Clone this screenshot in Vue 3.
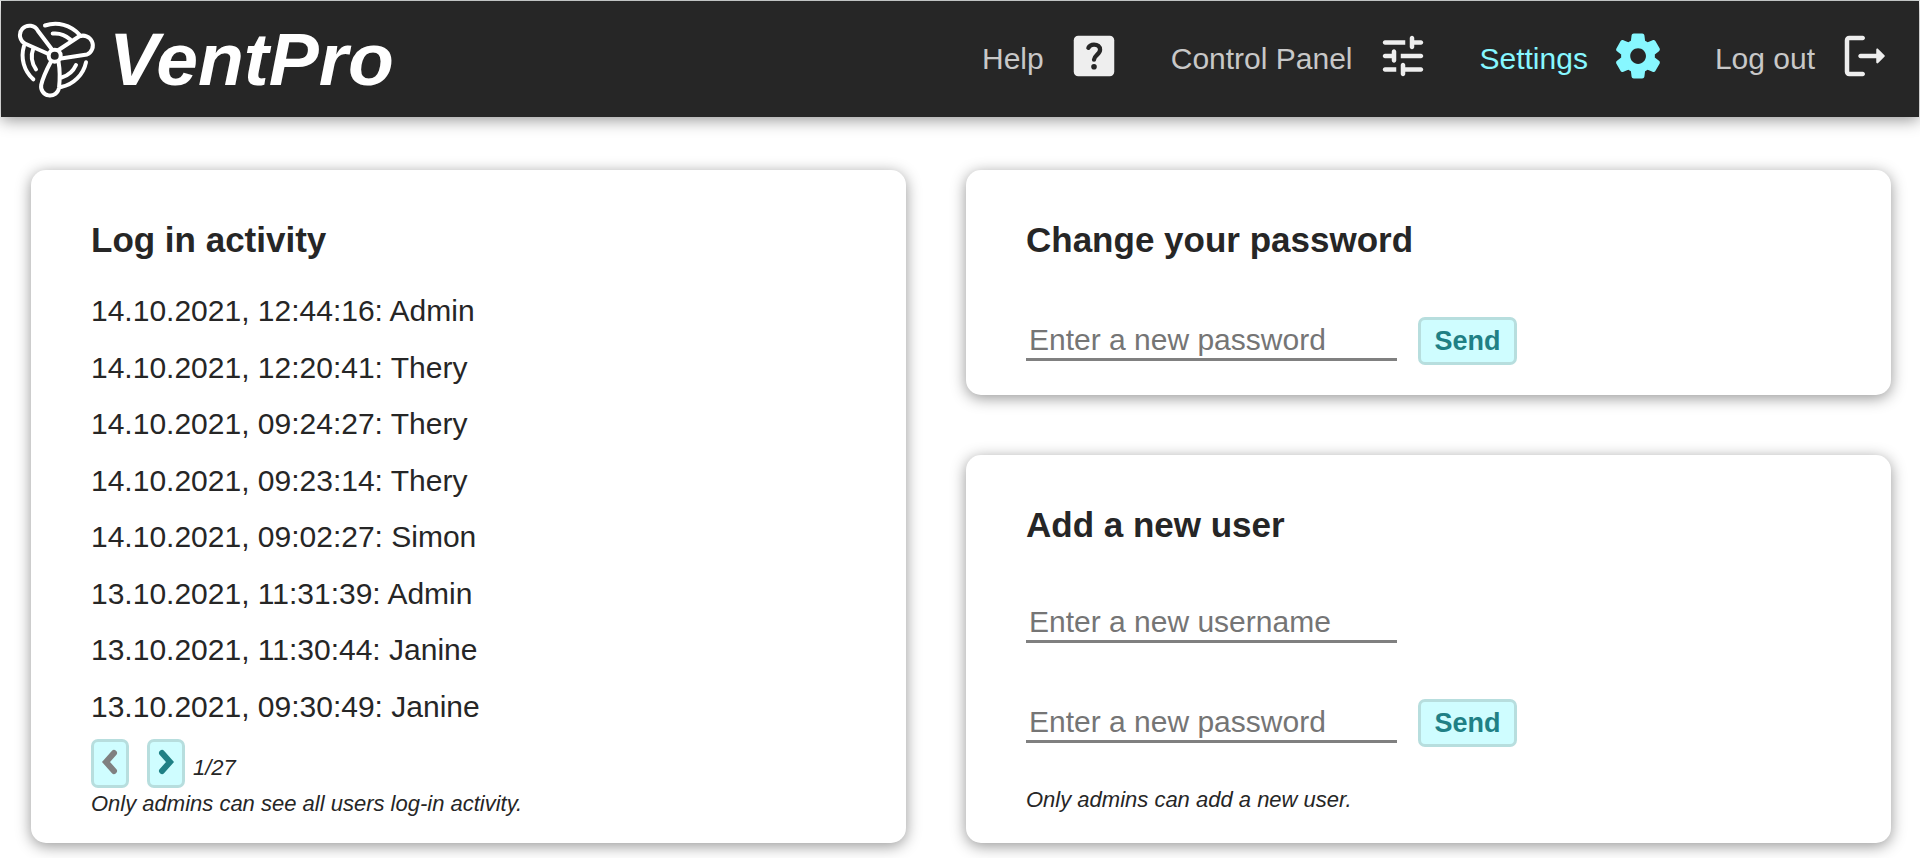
<script setup>
import { ref } from 'vue'

const activity = [
  '14.10.2021, 12:44:16: Admin',
  '14.10.2021, 12:20:41: Thery',
  '14.10.2021, 09:24:27: Thery',
  '14.10.2021, 09:23:14: Thery',
  '14.10.2021, 09:02:27: Simon',
  '13.10.2021, 11:31:39: Admin',
  '13.10.2021, 11:30:44: Janine',
  '13.10.2021, 09:30:49: Janine'
]

const ownPassword = ref('')
const userName = ref('')
const userPassword = ref('')
</script>

<template>
  <div class="page">
    <header class="topbar">
      <a class="brand" href="#">
        <svg class="brand-mark" viewBox="0 -1 80 80" aria-hidden="true">
          <circle cx="37.7" cy="35.7" r="6" />
          <path d="M35 29.5 21 11A9.5 9.5 0 1 0 9 24L31.5 34" />
          <path d="M41.5 30 62 16.5A9.5 9.5 0 1 1 70 34.5L44 38.5" />
          <path d="M34 41.5C30 49 26 57 24.2 65A9 9 0 1 0 42 68C43 59 43 50 41.5 41.5" />
          <path d="M28 5.5A32 32 0 0 1 62.3 14.5M35.7 13.5A22.5 22.5 0 0 1 53.3 19.5" />
          <path d="M7 26A32 32 0 0 0 16.3 59.3M16.3 28.5A22.5 22.5 0 0 0 19 49.3" />
          <path d="M69 42.3A32 32 0 0 1 44 67M59 45A22.5 22.5 0 0 1 44.5 57.5" />
        </svg>
        <span class="brand-name">VentPro</span>
      </a>
      <nav class="menu">
        <a class="menu-item" href="#">
          <span>Help</span>
          <svg class="icon" viewBox="0 0 24 24" aria-hidden="true">
            <rect x="3" y="3" width="18" height="18" rx="2" />
            <path class="question" d="M9.5 8.4C9.9 7.5 10.8 6.9 12 6.9c1.6 0 2.7.9 2.7 2.3 0 2-2.6 2.5-2.7 4.4" />
            <circle class="question-dot" cx="12" cy="16.8" r="1.25" />
          </svg>
        </a>
        <a class="menu-item" href="#">
          <span>Control Panel</span>
          <svg class="icon" viewBox="0 0 24 24" aria-hidden="true">
            <path d="M3 18c0 .55.45 1 1 1h5v-2H4c-.55 0-1 .45-1 1zM3 6c0 .55.45 1 1 1h9V5H4c-.55 0-1 .45-1 1zm10 14v-1h7c.55 0 1-.45 1-1s-.45-1-1-1h-7v-1c0-.55-.45-1-1-1s-1 .45-1 1v4c0 .55.45 1 1 1s1-.45 1-1zM7 10v1H4c-.55 0-1 .45-1 1s.45 1 1 1h3v1c0 .55.45 1 1 1s1-.45 1-1v-4c0-.55-.45-1-1-1s-1 .45-1 1zm14 2c0-.55-.45-1-1-1h-9v2h9c.55 0 1-.45 1-1zm-5-3c.55 0 1-.45 1-1V7h3c.55 0 1-.45 1-1s-.45-1-1-1h-3V4c0-.55-.45-1-1-1s-1 .45-1 1v4c0 .55.45 1 1 1z" />
          </svg>
        </a>
        <a class="menu-item active" href="#" aria-current="page">
          <span>Settings</span>
          <svg class="icon" viewBox="0 0 24 24" aria-hidden="true">
            <path d="M19.5 12c0-.23-.01-.45-.03-.68l1.86-1.41c.4-.3.51-.86.26-1.3l-1.87-3.23c-.25-.44-.79-.62-1.25-.42l-2.15.91c-.37-.26-.76-.49-1.17-.68l-.29-2.31c-.06-.5-.49-.88-.99-.88h-3.73c-.51 0-.94.38-1 .88l-.29 2.31c-.41.19-.8.42-1.17.68l-2.15-.91c-.46-.2-1-.02-1.25.42L2.41 8.62c-.25.44-.14.99.26 1.3l1.86 1.41c-.02.22-.03.44-.03.67s.01.45.03.68l-1.86 1.41c-.4.3-.51.86-.26 1.3l1.87 3.23c.25.44.79.62 1.25.42l2.15-.91c.37.26.76.49 1.17.68l.29 2.31c.06.5.49.88.99.88h3.73c.5 0 .93-.38.99-.88l.29-2.31c.41-.19.8-.42 1.17-.68l2.15.91c.46.2 1 .02 1.25-.42l1.87-3.23c.25-.44.14-.99-.26-1.3l-1.86-1.41c.03-.23.04-.45.04-.68zm-7.46 3.5c-1.93 0-3.5-1.57-3.5-3.5s1.57-3.5 3.5-3.5 3.5 1.57 3.5 3.5-1.57 3.5-3.5 3.5z" />
          </svg>
        </a>
        <a class="menu-item" href="#">
          <span>Log out</span>
          <svg class="icon" viewBox="0 0 24 24" aria-hidden="true">
            <path d="M5 5h6c.55 0 1-.45 1-1s-.45-1-1-1H5c-1.1 0-2 .9-2 2v14c0 1.1.9 2 2 2h6c.55 0 1-.45 1-1s-.45-1-1-1H5V5z" />
            <path d="M20.65 11.65l-2.79-2.79c-.32-.32-.86-.1-.86.35V11h-7c-.55 0-1 .45-1 1s.45 1 1 1h7v1.79c0 .45.54.67.85.35l2.79-2.79c.2-.19.2-.51.01-.7z" />
          </svg>
        </a>
      </nav>
    </header>

    <main class="content">
      <section class="card card-activity">
        <h2>Log in activity</h2>
        <ul class="log">
          <li v-for="entry in activity" :key="entry">{{ entry }}</li>
        </ul>
        <div class="pager">
          <button class="button arrow" type="button" aria-label="Previous page" disabled>
            <svg viewBox="0 0 18 26" aria-hidden="true"><path d="M13 4 5 13l8 9" /></svg>
          </button>
          <button class="button arrow" type="button" aria-label="Next page">
            <svg viewBox="0 0 18 26" aria-hidden="true"><path d="M5 4l8 9-8 9" /></svg>
          </button>
          <span class="page-count">1/27</span>
        </div>
        <p class="note">Only admins can see all users log-in activity.</p>
      </section>

      <div class="column">
        <section class="card">
          <h2>Change your password</h2>
          <form class="form form-password" @submit.prevent>
            <div class="row">
              <input v-model="ownPassword" type="password" aria-label="New password" placeholder="Enter a new password" />
              <button class="button send" type="submit">Send</button>
            </div>
          </form>
        </section>

        <section class="card">
          <h2>Add a new user</h2>
          <form class="form form-user" @submit.prevent>
            <div class="row">
              <input v-model="userName" type="text" aria-label="New username" placeholder="Enter a new username" />
            </div>
            <div class="row">
              <input v-model="userPassword" type="password" aria-label="Password of the new user" placeholder="Enter a new password" />
              <button class="button send" type="submit">Send</button>
            </div>
          </form>
          <p class="note note-user">Only admins can add a new user.</p>
        </section>
      </div>
    </main>
  </div>
</template>

<style>
body {
  margin: 0;
  background: #fff;
}
</style>

<style scoped>
.page {
  box-sizing: border-box;
  min-height: 100vh;
  display: flex;
  flex-direction: column;
  border-top: 1px solid #dfe3e2;
  font-family: "Liberation Sans", Arial, sans-serif;
  font-size: 30px;
  line-height: 34px;
  color: #262626;
}
.topbar {
  box-sizing: border-box;
  height: 116px;
  margin: 0 1px;
  padding: 0 27px 0 16px;
  display: flex;
  align-items: center;
  justify-content: space-between;
  background: #262626;
  box-shadow: 0 3px 15px rgba(0, 0, 0, 0.42);
}
.brand {
  display: flex;
  align-items: center;
  gap: 12px;
  color: #fff;
  text-decoration: none;
}
.brand-mark {
  width: 80px;
  height: 80px;
  fill: none;
  stroke: #fff;
  stroke-width: 4;
  stroke-linecap: round;
  stroke-linejoin: round;
}
.brand-name {
  font-size: 75px;
  line-height: 84px;
  font-weight: bold;
  font-style: italic;
}
.menu {
  display: flex;
  gap: 50px;
}
.menu-item {
  display: flex;
  align-items: center;
  gap: 23px;
  color: #c8c8c8;
  text-decoration: none;
  white-space: nowrap;
}
.icon {
  width: 54px;
  height: 54px;
  margin-bottom: 7px;
  fill: #eee;
}
.icon .question {
  fill: none;
  stroke: #262626;
  stroke-width: 1.9;
  stroke-linecap: round;
}
.icon .question-dot {
  fill: #262626;
}
.menu-item.active {
  color: #87f7ff;
}
.menu-item.active .icon {
  fill: #87f7ff;
}
.content {
  flex: 1;
  display: grid;
  grid-template-columns: 875fr 925fr;
  gap: 60px;
  align-items: stretch;
  padding: 53px 29px 15px 31px;
}
.column {
  display: flex;
  flex-direction: column;
  gap: 60px;
}
.card {
  padding: 50px 60px 30px;
  border-radius: 15px;
  background: #fff;
  box-shadow: 0 3px 15px rgba(0, 0, 0, 0.42);
}
.card-activity {
  display: flex;
  flex-direction: column;
  padding-bottom: 26px;
}
h2 {
  margin: 0;
  font-size: 35px;
  line-height: 40px;
}
.log {
  flex: 1;
  display: flex;
  flex-direction: column;
  margin: 23px 0 4px;
  padding: 0;
  list-style: none;
}
.log li {
  flex: 1;
  display: flex;
  align-items: center;
}
.pager {
  display: flex;
  align-items: center;
  gap: 18px;
}
.button {
  box-sizing: border-box;
  height: 48px;
  border: 3px solid #b7dede;
  border-radius: 7px;
  background: #cffdff;
  color: #1f8085;
  font-family: inherit;
  font-size: 27px;
  line-height: 34px;
  font-weight: bold;
}
.arrow {
  width: 38px;
  height: 49px;
  padding: 0 0 4px;
  display: flex;
  align-items: center;
  justify-content: center;
}
.arrow svg {
  width: 18px;
  height: 26px;
  fill: none;
  stroke: currentColor;
  stroke-width: 6;
  stroke-linecap: round;
}
.arrow:disabled {
  color: #808080;
}
.page-count {
  margin: 8px 0 0 -10px;
  font-size: 22px;
  line-height: 26px;
  font-style: italic;
}
.note {
  margin: 3px 0 0;
  font-size: 22px;
  line-height: 26px;
  font-style: italic;
}
.note-user {
  margin-top: 40px;
}
.form {
  display: flex;
  flex-direction: column;
  gap: 56px;
}
.form-password {
  margin-top: 57px;
}
.form-user {
  margin-top: 54px;
}
.row {
  display: flex;
  align-items: flex-start;
  gap: 21px;
}
input {
  box-sizing: border-box;
  width: 371px;
  height: 44px;
  padding: 4px 3px 0;
  border: 0;
  border-bottom: 3px solid #808080;
  border-radius: 0;
  outline: none;
  background: transparent;
  color: #262626;
  font-family: inherit;
  font-size: 30px;
}
input::placeholder {
  color: #757575;
  opacity: 1;
}
.send {
  width: 99px;
  padding: 0;
}
</style>
